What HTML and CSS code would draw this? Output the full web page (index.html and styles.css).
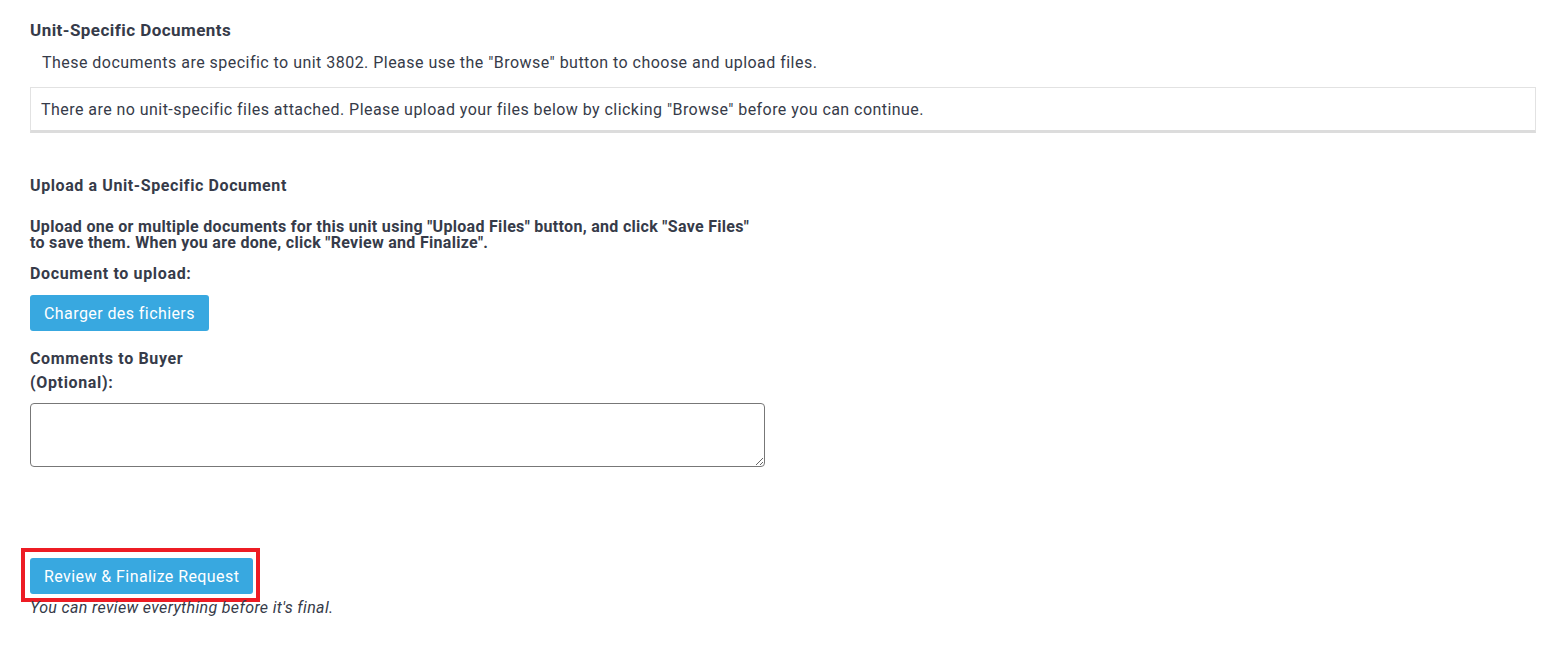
FILE: index.html
```html
<!DOCTYPE html>
<html>
<head>
    <title>Unit-Specific Documents</title>
    <link rel="stylesheet" href="styles.css">
</head>
<body>
    <div class="page">
        <h3 class="section-title">Unit-Specific Documents</h3>
        <p class="intro">These documents are specific to unit 3802. Please use the "Browse" button to choose and upload files.</p>
        <div class="files-box">
            There are no unit-specific files attached. Please upload your files below by clicking "Browse" before you can continue.
        </div>

        <form class="upload-form">
            <h4 class="upload-title">Upload a Unit-Specific Document</h4>
            <p class="upload-help">Upload one or multiple documents for this unit using "Upload Files" button, and click "Save Files" to save them. When you are done, click "Review and Finalize".</p>

            <label class="field-label">Document to upload:</label>
            <button type="button" class="btn-blue">Charger des fichiers</button>

            <label class="field-label comments-label" for="comments">Comments to Buyer (Optional):</label>
            <textarea id="comments" class="comments"></textarea>
        </form>

        <div class="finalize">
            <div class="highlight">
                <button type="button" class="btn-blue">Review &amp; Finalize Request</button>
            </div>
            <p class="note">You can review everything before it's final.</p>
        </div>
    </div>
</body>
</html>
```

FILE: styles.css
```css
body {
    margin: 0;
    font-family: Roboto, "Liberation Sans", sans-serif;
    color: #363b49;
    background: #fff;
}

.page {
    padding: 19px 20px 0 30px;
}

.section-title {
    font-size: 17px;
    font-weight: 700;
    letter-spacing: 0.45px;
    margin: 0;
    line-height: 22px;
}

.intro {
    font-size: 16px;
    letter-spacing: 0.47px;
    margin: 11px 0 0 12px;
    line-height: 22px;
}

.files-box {
    margin-top: 13px;
    border: 1px solid #e2e2e2;
    border-bottom: 3px solid #dcdcdc;
    padding: 11px 10px 9px;
    font-size: 16px;
    letter-spacing: 0.45px;
    line-height: 22px;
}

.upload-form {
    margin-top: 42px;
    width: 735px;
}

.upload-title {
    font-size: 16px;
    font-weight: 700;
    letter-spacing: 0.6px;
    margin: 0;
    line-height: 22px;
}

.upload-help {
    font-size: 16px;
    font-weight: 700;
    letter-spacing: 0.3px;
    line-height: 16px;
    margin: 22px 0 0 0;
}

.field-label {
    display: block;
    font-size: 16px;
    font-weight: 700;
    letter-spacing: 0.65px;
    line-height: 24px;
    margin-top: 11px;
}

.btn-blue {
    display: inline-block;
    background: #38a8e0;
    color: #fff;
    border: none;
    border-radius: 3px;
    font-family: Roboto, "Liberation Sans", sans-serif;
    font-size: 16px;
    letter-spacing: 0.42px;
    line-height: 20px;
    padding: 9px 14px 7px;
    margin-top: 9px;
    cursor: pointer;
}

.comments-label {
    width: 180px;
    margin-top: 16px;
}

.comments {
    display: block;
    width: 735px;
    height: 64px;
    box-sizing: border-box;
    margin-top: 8px;
    border: 1px solid #777;
    border-radius: 4px;
    padding: 6px;
}

.finalize {
    margin-top: 81px;
}

.highlight {
    display: inline-block;
    margin-left: -9px;
    border: 4px solid #ed1c24;
    padding: 6px 3px 4px 5px;
}

.highlight .btn-blue {
    margin-top: 0;
    display: block;
}

.note {
    margin: -5px 0 0 0;
    font-size: 16px;
    font-style: italic;
    letter-spacing: 0.35px;
    line-height: 22px;
}
```
